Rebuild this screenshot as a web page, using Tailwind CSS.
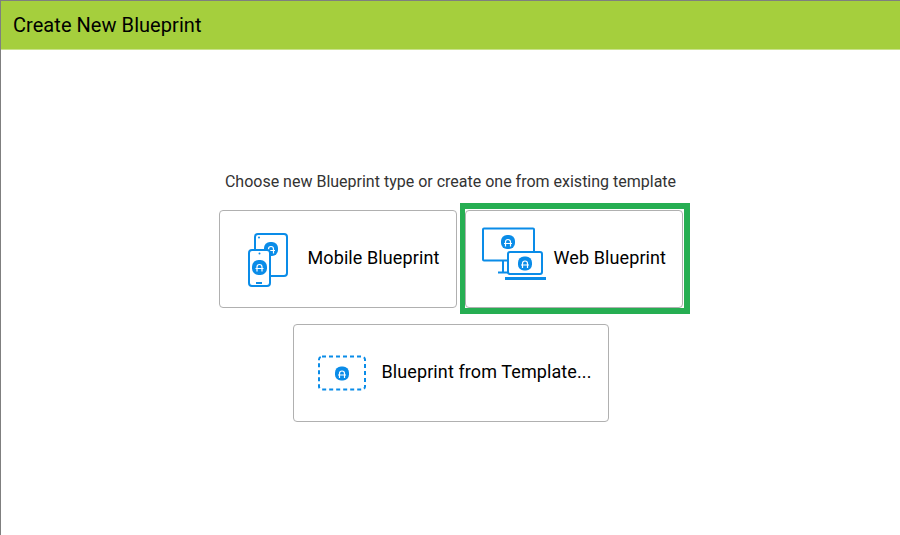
<!DOCTYPE html>
<html lang="en">
<head>
    <meta charset="UTF-8">
    <title>Create New Blueprint</title>
    <script src="https://cdn.jsdelivr.net/npm/@tailwindcss/browser@4"></script>
</head>
<body class="bg-white font-['Roboto',sans-serif] text-black">
    <div class="w-[900px] h-[535px] overflow-hidden border-l border-t border-[#7f7f7f] flex flex-col">
        <!-- Header -->
        <header class="h-[49px] shrink-0 bg-[#a5cf3d] border-b border-[#c9e28a] flex items-center pl-3 text-[20px] leading-[24px] font-[450] tracking-[0.05px] text-black">Create New Blueprint</header>

        <main class="flex flex-col items-center pt-[122px]">
            <p class="h-[20px] text-[16px] leading-[20px] text-[#333]">Choose new Blueprint type or create one from existing template</p>

            <div class="flex items-center gap-2 mt-[18px]">
                <!-- Mobile -->
                <div class="w-[238px] h-[98px] border border-[#b0b0b0] rounded-[4px] flex items-center pl-[28px]">
                    <svg width="42" height="58" viewBox="0 0 42 58" fill="none" class="shrink-0">
                        <rect x="7" y="4" width="32" height="42" rx="3" stroke="#0a8ce8" stroke-width="2"/>
                        <circle cx="11" cy="7.500" r="1" fill="#0a8ce8"/>
                        <rect x="16" y="12" width="14" height="14" rx="6" fill="#0a8ce8"/>
                        <path d="M20.500 23.500v-4.500a2.500 2.500 0 0 1 5 0v4.500M19 20.500h8" stroke="#fff" stroke-width="1.200"/>
                        <rect x="1" y="20" width="21" height="36" rx="3" fill="#fff" stroke="#0a8ce8" stroke-width="2"/>
                        <circle cx="11.500" cy="23.500" r="1" fill="#0a8ce8"/>
                        <rect x="4" y="30" width="15" height="15" rx="6.500" fill="#0a8ce8"/>
                        <path d="M9 41.500v-4.500a2.500 2.500 0 0 1 5 0v4.500M7.500 38.500h8" stroke="#fff" stroke-width="1.200"/>
                        <rect x="8" y="52" width="6" height="2" fill="#0a8ce8"/>
                    </svg>
                    <span class="ml-[18px] -mt-[2px] text-[18px] leading-[24px] font-[450] text-black tracking-[0.1px]">Mobile Blueprint</span>
                </div>

                <!-- Web, highlighted -->
                <div class="relative w-[218px] h-[98px] border border-[#b0b0b0] rounded-[4px] flex items-center pl-[16px]">
                    <span class="absolute -left-[6px] -right-[8px] -top-[8px] -bottom-[7px] border-[6px] border-l-[5px] border-[#26ae52] pointer-events-none"></span>
                    <svg width="65" height="64" viewBox="0 0 65 64" fill="none" class="shrink-0">
                        <rect x="1" y="1.500" width="51" height="32" stroke="#0a8ce8" stroke-width="2" rx="1"/>
                        <path d="M21 33v12.500M16 45.500h11" stroke="#0a8ce8" stroke-width="2"/>
                        <rect x="19" y="8" width="14" height="14" rx="6" fill="#0a8ce8"/>
                        <path d="M23.500 19.500v-4.500a2.500 2.500 0 0 1 5 0v4.500M22 16.500h8" stroke="#fff" stroke-width="1.200"/>
                        <rect x="26" y="25" width="34" height="22" rx="2" fill="#fff" stroke="#0a8ce8" stroke-width="2"/>
                        <rect x="23" y="50" width="41" height="3" fill="#0a8ce8"/>
                        <rect x="36" y="29.500" width="14" height="14" rx="6" fill="#0a8ce8"/>
                        <path d="M40.500 41v-4.500a2.500 2.500 0 0 1 5 0v4.500M39 38h8" stroke="#fff" stroke-width="1.200"/>
                    </svg>
                    <span class="ml-[7px] -mt-[2px] text-[18px] leading-[24px] font-[450] text-black tracking-[0.1px]">Web Blueprint</span>
                </div>
            </div>

            <!-- Template -->
            <div class="w-[316px] h-[98px] mt-[16px] border border-[#b0b0b0] rounded-[4px] flex items-center pl-[24px]">
                <svg width="48" height="36" viewBox="0 0 48 36" fill="none" class="shrink-0">
                    <rect x="1" y="1.500" width="46" height="33" rx="3" stroke="#0a8ce8" stroke-width="2" stroke-dasharray="4 3"/>
                    <rect x="17" y="11.500" width="14" height="14" rx="6" fill="#0a8ce8"/>
                    <path d="M21.500 23v-4.500a2.500 2.500 0 0 1 5 0v4.500M20 20h8" stroke="#fff" stroke-width="1.200"/>
                </svg>
                <span class="ml-[16px] -mt-[2px] text-[18px] leading-[24px] font-[450] text-black tracking-[0.1px]">Blueprint from Template...</span>
            </div>
        </main>
    </div>
</body>
</html>
